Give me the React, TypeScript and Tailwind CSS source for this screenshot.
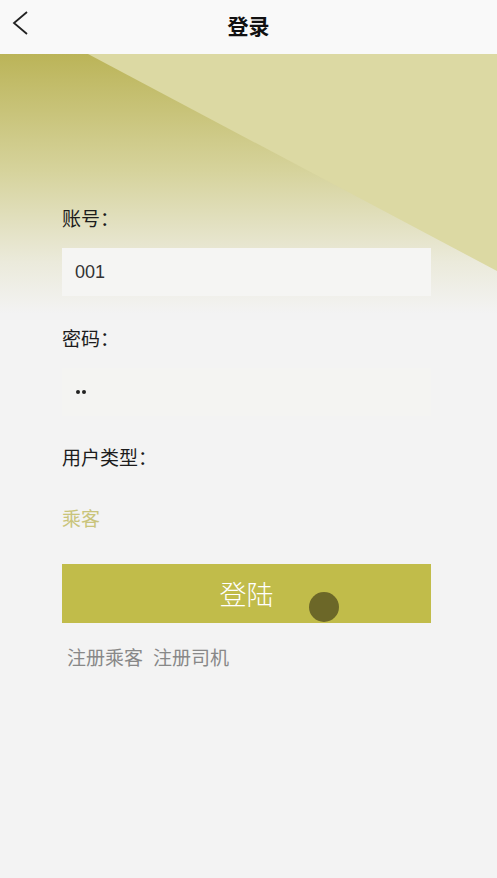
const cjk = "font-['Liberation_Sans','Noto_Sans_CJK_SC',sans-serif]";

function Header() {
  return (
    <header className="relative z-10 flex h-[54px] items-center justify-center bg-[#f9f9f9]">
      <button type="button" className="absolute left-[10px] top-[9px] text-[#222]">
        <svg width="22" height="28" viewBox="0 0 22 28" fill="none">
          <polyline points="17,3 4,14 17,25" stroke="currentColor" strokeWidth="1.8" strokeLinejoin="miter" />
        </svg>
      </button>
      <h1 className="text-[21px] font-bold text-[#111]">登录</h1>
    </header>
  );
}

function Backdrop() {
  return (
    <svg
      className="pointer-events-none absolute left-0 top-0"
      width="497"
      height="260"
      viewBox="0 0 497 260"
    >
      <defs>
        <linearGradient id="fade" x1="0" y1="0" x2="0" y2="1">
          <stop offset="0" stopColor="#bbb458" />
          <stop offset="0.45" stopColor="#d6d39c" />
          <stop offset="0.8" stopColor="#ebeadb" />
          <stop offset="1" stopColor="#f3f3f3" />
        </linearGradient>
      </defs>
      <rect width="497" height="260" fill="url(#fade)" />
      <polygon points="88,0 497,0 497,217" fill="#dcd9a3" />
    </svg>
  );
}

function Field({ label, children, tint }: { label: string; children: React.ReactNode; tint: string }) {
  return (
    <div>
      <p className="text-[19px] leading-[24px] text-[#1c1c1c]">{label}</p>
      <div className={`mt-[16px] flex h-[48px] items-center px-[13px] ${tint}`}>{children}</div>
    </div>
  );
}

export default function App() {
  return (
    <div className={`min-h-[878px] w-[497px] bg-[#f3f3f3] ${cjk}`}>
      <Header />
      <main className="relative">
        <Backdrop />
        <div className="relative pl-[62px] pr-[66px] pt-[154px]">
          <Field label="账号：" tint="bg-[#f5f5f3]">
            <span className="text-[18px] text-[#333]">001</span>
          </Field>

          <div className="mt-[32px]">
            <Field label="密码：" tint="bg-[#f4f4f2]">
              <span className="flex gap-[2px] pl-[1px]">
                <span className="h-[4px] w-[4px] rounded-full bg-[#222]" />
                <span className="h-[4px] w-[4px] rounded-full bg-[#222]" />
              </span>
            </Field>
          </div>

          <p className="mt-[31px] text-[19px] leading-[24px] text-[#1c1c1c]">用户类型：</p>
          <p className="mt-[37px] text-[19px] leading-[24px] text-[#c9c47a]">乘客</p>

          <button
            type="button"
            className="relative mt-[32px] flex h-[59px] w-full items-center justify-center bg-[#c1bc4a] pt-[6px] text-[27px] font-light text-white"
          >
            登陆
            <span className="absolute left-[247px] top-[28px] h-[30px] w-[30px] rounded-full bg-[#676226] opacity-95" />
          </button>

          <div className="mt-[24px] flex gap-[10px] pl-[5px] text-[19px] leading-[24px] text-[#888]">
            <span>注册乘客</span>
            <span>注册司机</span>
          </div>
        </div>
      </main>
    </div>
  );
}
